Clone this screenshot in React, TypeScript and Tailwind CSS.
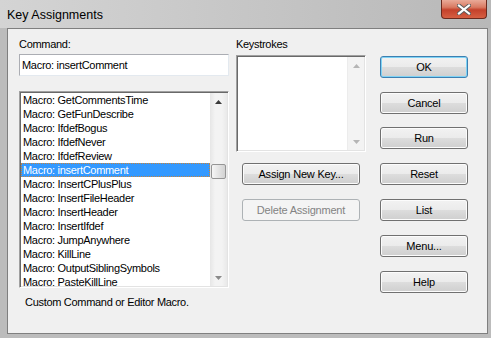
import React from 'react';

const macros = [
  'GetCommentsTime',
  'GetFunDescribe',
  'IfdefBogus',
  'IfdefNever',
  'IfdefReview',
  'insertComment',
  'InsertCPlusPlus',
  'InsertFileHeader',
  'InsertHeader',
  'InsertIfdef',
  'JumpAnywhere',
  'KillLine',
  'OutputSiblingSymbols',
  'PasteKillLine',
];

// small scroll arrow, up or down
const Arrow = ({ down, color }: { down?: boolean; color: string }) => (
  <svg width="7" height="4" viewBox="0 0 7 4" className="block">
    {down ? (
      <path d="M0 0H7L3.5 4Z" fill={color} />
    ) : (
      <path d="M0 4H7L3.5 0Z" fill={color} />
    )}
  </svg>
);

interface BtnProps {
  label: string;
  variant?: 'normal' | 'default' | 'disabled';
  className?: string;
}

const Btn: React.FC<BtnProps> = ({ label, variant = 'normal', className = '' }) => {
  const look =
    variant === 'default'
      ? 'border-[#3c7fb1] shadow-[inset_0_0_0_1px_#7fd3f5] bg-[linear-gradient(to_bottom,#f2f2f2_0%,#ebebeb_50%,#dddddd_50%,#cfcfcf_100%)] text-black'
      : variant === 'disabled'
      ? 'border-[#adb2b5] bg-[#f4f4f4] text-[#838383]'
      : 'border-[#707070] shadow-[inset_0_0_0_1px_#fcfcfc] bg-[linear-gradient(to_bottom,#f2f2f2_0%,#ebebeb_50%,#dddddd_50%,#cfcfcf_100%)] text-black';
  return (
    <div
      className={`h-[22px] rounded-[3px] border flex items-center justify-center text-[11px] leading-[13px] tracking-[-0.2px] ${look} ${className}`}
    >
      {label}
    </div>
  );
};

export default function App() {
  return (
    <div className="w-[491px] h-[338px] bg-[#bcbcbc] flex flex-col font-['Liberation_Sans',Arial,sans-serif] select-none overflow-hidden">
      {/* title bar */}
      <div className="h-[28px] flex items-start justify-between bg-[linear-gradient(to_right,#d4d4d4,#c6c6c6_50%,#b8b8b8)]">
        <div className="pl-[7px] pt-[7px] text-[12.5px] leading-[16px] text-black">Key Assignments</div>
        <div className="mr-[4px] w-[46px] h-[19px] rounded-b-[4px] border border-t-0 border-[#6b2a1e] bg-[linear-gradient(to_bottom,#e9aa98_0%,#d97a62_40%,#c4412b_55%,#d65f42_100%)] flex items-center justify-center">
          <svg width="14" height="11" viewBox="0 0 14 11">
            <path d="M2 1.5L12 9.5M12 1.5L2 9.5" stroke="#5b5b5b" strokeWidth="4" strokeLinecap="square" />
            <path d="M2 1.5L12 9.5M12 1.5L2 9.5" stroke="#ffffff" strokeWidth="2.2" strokeLinecap="square" />
          </svg>
        </div>
      </div>

      {/* client area */}
      <div className="ml-[7px] mr-[3px] h-[306px] border border-[#7f7f7f] bg-[#f0f0f0] flex pl-[11px] text-[11px] leading-[13px] tracking-[-0.3px] text-black">
        {/* left column */}
        <div className="w-[210px] flex flex-col pt-[9px]">
          <div>Command:</div>
          <div className="mt-[3px] h-[22px] border border-[#abadb3] border-r-[#e3e9ef] border-b-[#e3e9ef] bg-white pl-[2px] flex items-center">
            Macro: insertComment
          </div>
          <div className="mt-[15px] h-[197px] flex border border-[#a0a0a0] border-r-white border-b-white shadow-[inset_1px_1px_0_#696969,inset_-1px_-1px_0_#e3e3e3] bg-white p-[1px]">
            <div className="flex-1 overflow-hidden">
              {macros.map((m) => (
                <div
                  key={m}
                  className={
                    m === 'insertComment'
                      ? 'h-[14px] leading-[14px] pl-[2px] whitespace-nowrap bg-[#3399ff] text-white outline-1 outline-dotted outline-[#c8843c] -outline-offset-1'
                      : 'h-[14px] leading-[14px] pl-[2px] whitespace-nowrap'
                  }
                >
                  Macro: {m}
                </div>
              ))}
            </div>
            <div className="w-[17px] flex flex-col bg-[linear-gradient(to_right,#e6e6e6,#f3f3f3_30%,#f3f3f3_70%,#e9e9e9)]">
              <div className="h-[17px] flex items-center justify-center">
                <Arrow color="#3a3a3a" />
              </div>
              <div className="mt-[54px] mx-auto w-[15px] h-[15px] rounded-[2px] border border-[#959595] bg-[linear-gradient(to_right,#f6f6f6,#e4e4e4_50%,#d2d2d2)]" />
              <div className="flex-1" />
              <div className="h-[17px] flex items-center justify-center">
                <Arrow down color="#8a8a8a" />
              </div>
            </div>
          </div>
          <div className="mt-[8px] pl-[6px]">Custom Command or Editor Macro.</div>
        </div>

        {/* middle column */}
        <div className="ml-[7px] w-[130px] flex flex-col pt-[9px]">
          <div>Keystrokes</div>
          <div className="mt-[4px] h-[97px] flex border border-[#a0a0a0] border-r-white border-b-white shadow-[inset_1px_1px_0_#696969,inset_-1px_-1px_0_#e3e3e3] bg-white p-[1px]">
            <div className="flex-1" />
            <div className="w-[17px] flex flex-col bg-[#f3f3f3] border-l border-[#ececec]">
              <div className="h-[17px] flex items-center justify-center">
                <Arrow color="#b5b5b5" />
              </div>
              <div className="flex-1" />
              <div className="h-[17px] flex items-center justify-center">
                <Arrow down color="#b5b5b5" />
              </div>
            </div>
          </div>
          <Btn label="Assign New Key..." className="mt-[11px] ml-[6px] w-[118px]" />
          <Btn label="Delete Assignment" variant="disabled" className="mt-[14px] ml-[6px] w-[118px]" />
        </div>

        {/* right column */}
        <div className="ml-[14px] w-[88px] flex flex-col pt-[27px]">
          <Btn label="OK" variant="default" />
          <Btn label="Cancel" className="mt-[14px]" />
          <Btn label="Run" className="mt-[13px]" />
          <Btn label="Reset" className="mt-[14px]" />
          <Btn label="List" className="mt-[14px]" />
          <Btn label="Menu..." className="mt-[14px]" />
          <Btn label="Help" className="mt-[14px]" />
        </div>
      </div>
    </div>
  );
}
